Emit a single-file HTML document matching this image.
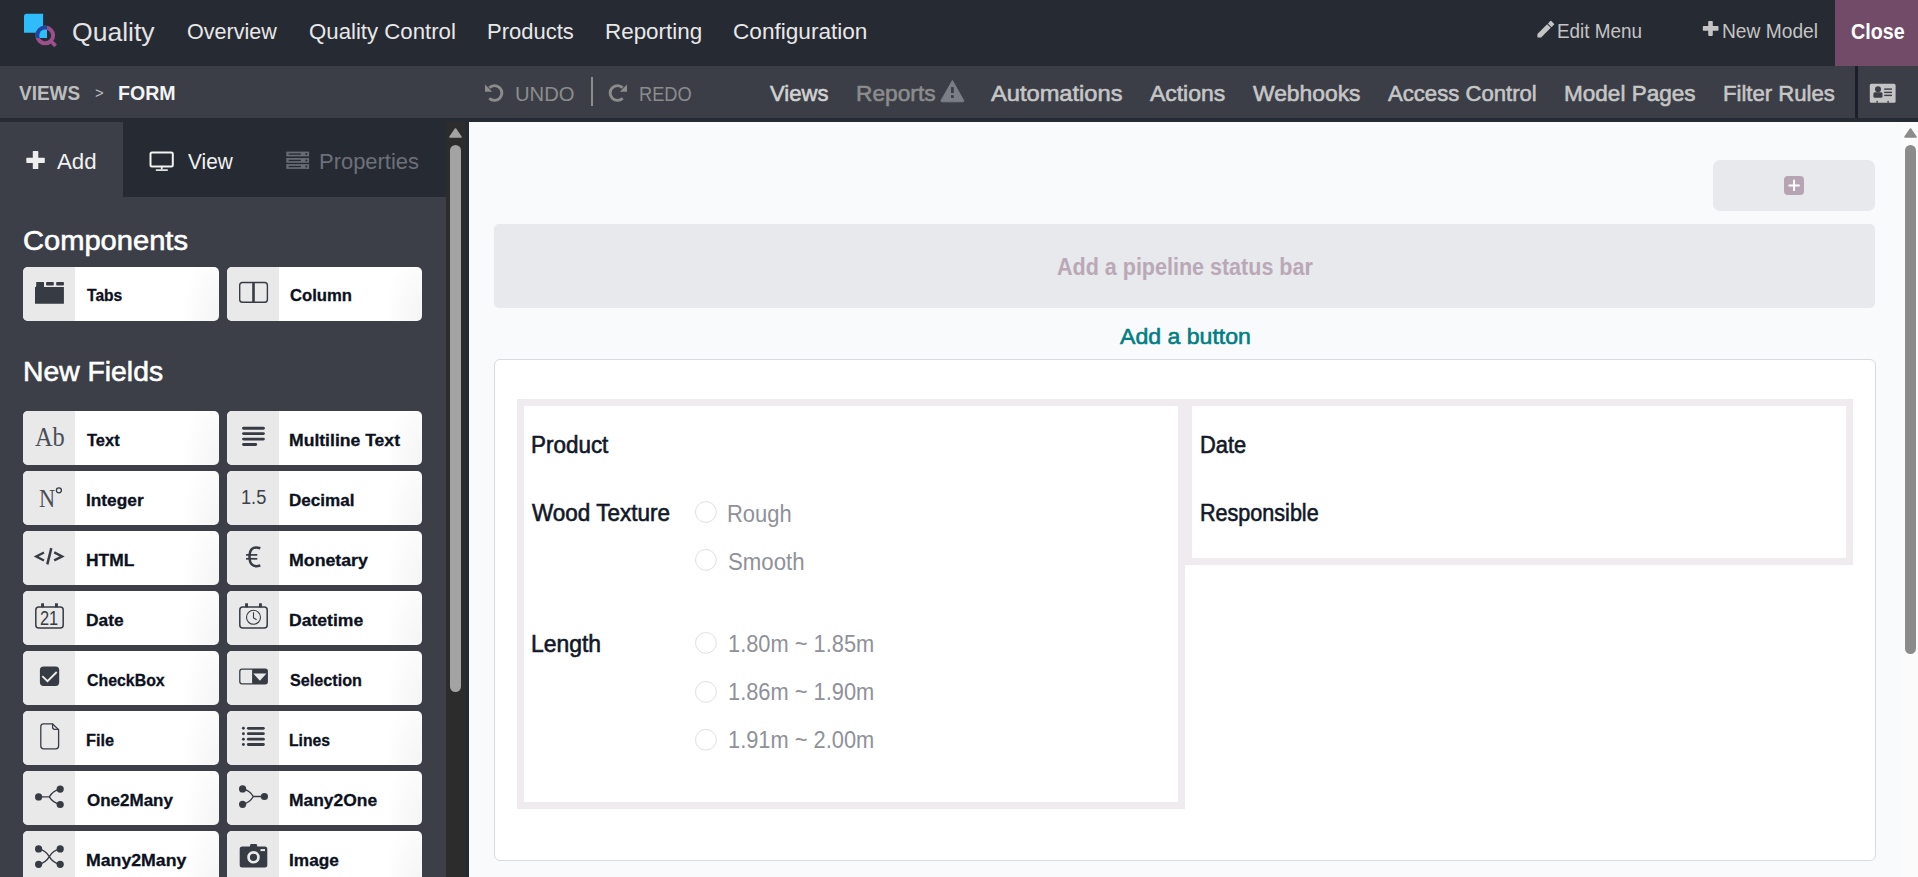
<!DOCTYPE html>
<html><head><meta charset="utf-8"><style>
*{box-sizing:border-box}
html,body{margin:0;padding:0;width:1918px;height:877px;overflow:hidden;background:#f9fafb;font-family:'Liberation Sans',sans-serif}
.a{position:absolute}
.t{position:absolute;white-space:nowrap;line-height:1;transform-origin:0 0}
.card{position:absolute;height:54px;background:#fff;border-radius:5px;overflow:hidden;background-image:radial-gradient(ellipse 38px 75px at 100% 100%,rgba(0,0,0,0.045),rgba(0,0,0,0) 100%)}
.card .ci{position:absolute;left:0;top:0;width:52px;height:54px;background:#e9e9ea}
</style></head><body>
<div class="a" style="left:0;top:0;width:1918px;height:66px;background:#262a33"></div>
<div class="a" style="left:1835px;top:0;width:83px;height:66px;background:#714b67"></div>
<div class="a" style="left:0;top:66px;width:1918px;height:52px;background:#3b3e47"></div>
<div class="a" style="left:0;top:118px;width:1918px;height:4px;background:#262a33"></div>
<div class="a" style="left:1855px;top:66px;width:3px;height:52px;background:#1a1f2b"></div>
<div class="a" style="left:591px;top:77px;width:2px;height:29px;background:#8c8c8c"></div>
<!-- sidebar -->
<div class="a" style="left:0;top:118px;width:469px;height:759px;background:#262a33"></div>
<div class="a" style="left:0;top:197px;width:446px;height:680px;background:#3c3f47"></div>
<div class="a" style="left:0;top:122px;width:123px;height:75px;background:#3c3f47"></div>
<div class="a" style="left:446px;top:122px;width:19px;height:755px;background:#2c2c2c"></div>
<div class="a" style="left:450px;top:145px;width:11px;height:547px;background:#a3a3a3;border-radius:6px"></div>
<!-- main -->
<div class="a" style="left:469px;top:122px;width:1449px;height:755px;background:#f9fafb"></div>
<div class="a" style="left:1901px;top:122px;width:17px;height:755px;background:#fbfbfb"></div>
<div class="a" style="left:1905px;top:145px;width:11px;height:509px;background:#8b8b8b;border-radius:6px"></div>
<div class="a" style="left:1713px;top:160px;width:162px;height:51px;background:#e7e9ed;border-radius:7px"></div>
<div class="a" style="left:1784px;top:176px;width:20px;height:19px;background:#b6a3b4;border-radius:4px"></div>
<div class="a" style="left:494px;top:224px;width:1381px;height:84px;background:#e7e9ed;border-radius:5px"></div>
<div class="a" style="left:494px;top:359px;width:1382px;height:502px;background:#fff;border:1px solid #d8dadd;border-radius:6px"></div>
<div class="a" style="left:517px;top:399px;width:668px;height:410px;border:7px solid #efebee;background:#fff"></div>
<div class="a" style="left:1185px;top:399px;width:668px;height:166px;border:7px solid #efebee;background:#fff"></div>
<div class="card" style="left:23px;top:267px;width:196px"><div class="ci"></div></div>
<div class="card" style="left:227px;top:267px;width:195px"><div class="ci"></div></div>
<div class="card" style="left:23px;top:411px;width:196px"><div class="ci"></div></div>
<div class="card" style="left:227px;top:411px;width:195px"><div class="ci"></div></div>
<div class="card" style="left:23px;top:471px;width:196px"><div class="ci"></div></div>
<div class="card" style="left:227px;top:471px;width:195px"><div class="ci"></div></div>
<div class="card" style="left:23px;top:531px;width:196px"><div class="ci"></div></div>
<div class="card" style="left:227px;top:531px;width:195px"><div class="ci"></div></div>
<div class="card" style="left:23px;top:591px;width:196px"><div class="ci"></div></div>
<div class="card" style="left:227px;top:591px;width:195px"><div class="ci"></div></div>
<div class="card" style="left:23px;top:651px;width:196px"><div class="ci"></div></div>
<div class="card" style="left:227px;top:651px;width:195px"><div class="ci"></div></div>
<div class="card" style="left:23px;top:711px;width:196px"><div class="ci"></div></div>
<div class="card" style="left:227px;top:711px;width:195px"><div class="ci"></div></div>
<div class="card" style="left:23px;top:771px;width:196px"><div class="ci"></div></div>
<div class="card" style="left:227px;top:771px;width:195px"><div class="ci"></div></div>
<div class="card" style="left:23px;top:831px;width:196px"><div class="ci"></div></div>
<div class="card" style="left:227px;top:831px;width:195px"><div class="ci"></div></div>
<svg class="a" style="left:0;top:0;overflow:visible" width="1918" height="877" viewBox="0 0 1918 877">
<defs>
<clipPath id="q1"><rect x="30" y="20" width="17" height="18"/></clipPath>
</defs>
<!-- logo -->
<path d="M24,16.3 Q24,13.8 26.5,13.8 H43.1 V32.8 H24 Z" fill="#2ebcfa"/>
<circle cx="45.2" cy="35.4" r="7.9" fill="none" stroke="#9c5089" stroke-width="4"/>
<g clip-path="url(#q1)"><circle cx="45.2" cy="35.4" r="7.9" fill="none" stroke="#1a4aa0" stroke-width="4"/><circle cx="45.2" cy="35.4" r="5.9" fill="#2ebcfa"/></g>
<line x1="50.8" y1="41" x2="55.6" y2="45.8" stroke="#9c5089" stroke-width="3.8"/>
<!-- pencil -->
<g transform="translate(1545.5,29.5) rotate(-45)" fill="#c4c4c4">
<path d="M-11.4,0 L-8.8,-2.6 H4.9 V2.6 H-8.8 Z"/>
<rect x="5.9" y="-2.6" width="4.2" height="5.2" rx="0.7"/>
</g>
<!-- plus new model -->
<rect x="1702.8" y="26.1" width="15.7" height="4.7" rx="0.8" fill="#c4c4c4"/>
<rect x="1708.2" y="20.9" width="4.6" height="15" rx="0.8" fill="#c4c4c4"/>
<!-- undo -->
<g id="undo" fill="none" stroke="#8c8c8c">
<path d="M489.3,87.8 A7.35,7.35 0 1 1 489.3,98.2" stroke-width="2.9"/>
<path d="M485,84.6 L485,91.8 L492.2,91.8 Z" fill="#8c8c8c" stroke="none"/>
</g>
<g transform="translate(1112,0) scale(-1,1)" fill="none" stroke="#8c8c8c">
<path d="M489.3,87.8 A7.35,7.35 0 1 1 489.3,98.2" stroke-width="2.9"/>
<path d="M485,84.6 L485,91.8 L492.2,91.8 Z" fill="#8c8c8c" stroke="none"/>
</g>
<!-- warning -->
<path d="M952.4,80.5 L963.6,100.2 Q964.4,101.8 962.6,101.8 L942.2,101.8 Q940.4,101.8 941.2,100.2 Z" fill="#7b7e84" stroke="#7b7e84" stroke-width="1" stroke-linejoin="round"/>
<rect x="951" y="87.1" width="2.8" height="5.9" fill="#3b3e47"/>
<rect x="951" y="95.2" width="2.8" height="2.7" fill="#3b3e47"/>
<!-- id card -->
<rect x="1869.8" y="83.8" width="25.8" height="19" rx="1.6" fill="#c4c4c4"/>
<circle cx="1878" cy="89.2" r="3" fill="#3b3e47"/>
<rect x="1873.4" y="92.2" width="9.1" height="5.6" rx="1.5" fill="#3b3e47"/>
<rect x="1884.2" y="88.4" width="7.8" height="1.4" fill="#3b3e47"/>
<rect x="1884.2" y="91.7" width="7.8" height="1.4" fill="#3b3e47"/>
<rect x="1884.2" y="94.7" width="7.8" height="1.4" fill="#3b3e47"/>
<rect x="1876.4" y="100.8" width="1.4" height="2" fill="#3b3e47"/>
<rect x="1887.4" y="100.8" width="1.4" height="2" fill="#3b3e47"/>
<!-- sidebar tab icons -->
<rect x="26.3" y="157.8" width="18.5" height="5.1" rx="0.6" fill="#eeeeee"/>
<rect x="32.8" y="151.1" width="5.5" height="18" rx="0.6" fill="#eeeeee"/>
<rect x="150.5" y="152.5" width="22.3" height="14.1" rx="1.5" fill="none" stroke="#f2f2f2" stroke-width="2"/>
<rect x="160.9" y="166.5" width="1.7" height="3" fill="#f2f2f2"/>
<rect x="155.8" y="169.3" width="12" height="1.6" fill="#f2f2f2"/>
<g fill="#676b73">
<rect x="286.3" y="151.6" width="22.8" height="4.8"/>
<rect x="286.3" y="158" width="22.8" height="4.8"/>
<rect x="286.3" y="164.1" width="22.8" height="4.8"/>
</g>
<g fill="#262a33">
<rect x="288.6" y="153.4" width="12.3" height="1.3"/><circle cx="306.4" cy="154" r="1"/>
<rect x="288.6" y="159.8" width="12.3" height="1.3"/><circle cx="306.4" cy="160.4" r="1"/>
<rect x="288.6" y="165.9" width="12.3" height="1.3"/><circle cx="306.4" cy="166.5" r="1"/>
</g>
<!-- card icons -->
<g fill="#373b44">
<!-- tabs -->
<rect x="36.2" y="282" width="7.8" height="6" rx="0.5"/>
<rect x="46.1" y="282" width="7.7" height="3.6" rx="0.8"/>
<rect x="56.2" y="282" width="7.7" height="3.6" rx="0.8"/>
<path d="M35,287 H36.2 V286 H44 V287 H63.9 V303.7 H35 Z"/>
</g>
<g fill="none" stroke="#373b44">
<!-- column -->
<rect x="239.7" y="282.5" width="27.7" height="19.7" rx="2.8" stroke-width="1.4"/>
<line x1="253.5" y1="282.5" x2="253.5" y2="302.2" stroke-width="2.6"/>
<!-- multiline -->
<g stroke-width="2.9" stroke-linecap="round">
<line x1="243.5" y1="428.2" x2="263.4" y2="428.2"/>
<line x1="243.5" y1="433.6" x2="263.4" y2="433.6"/>
<line x1="243.5" y1="439.1" x2="263.4" y2="439.1"/>
<line x1="243.5" y1="444.5" x2="255.7" y2="444.5"/>
</g>
<!-- html -->
<g stroke-width="2.3" stroke-linecap="butt" stroke-linejoin="miter">
<polyline points="44,552.4 36.2,556.4 44,560.4"/>
<polyline points="54.2,552.4 62.2,556.4 54.2,560.4"/>
<line x1="51.3" y1="548.1" x2="47.3" y2="564.4" stroke-width="2.5"/>
</g>
<!-- euro -->
<path d="M260.3,548.3 C252,545.6 249.5,550.5 249.5,556.8 C249.5,563.2 252,568 260.3,565.5" stroke-width="2.5"/>
<line x1="246" y1="554.9" x2="257.3" y2="554.9" stroke-width="1.7"/>
<line x1="246" y1="558.8" x2="257.3" y2="558.8" stroke-width="1.7"/>
<!-- calendars -->
<rect x="35.8" y="607.1" width="27.4" height="21" rx="3" stroke-width="1.5"/>
<rect x="239.8" y="607.1" width="27.4" height="21" rx="3" stroke-width="1.5"/>
<circle cx="253.5" cy="617.3" r="7" stroke-width="1.1"/>
<circle cx="58.9" cy="490.3" r="2.5" stroke-width="1.3"/>
<polyline points="253.5,612.2 253.5,617.9 256.6,619.8" stroke-width="1.1"/>
<!-- checkbox -->
<!-- selection -->
<path d="M252.1,669.1 H242 Q239.8,669.1 239.8,671.6 V681.6 Q239.8,683.9 242,683.9 H252.1" stroke-width="1.3"/>
<!-- file -->
<path d="M52.4,723.8 H43.6 Q40.8,723.8 40.8,726.6 V746.1 Q40.8,748.9 43.6,748.9 H55.8 Q58.6,748.9 58.6,746.1 V729.6 Z" stroke-width="1.3" stroke-linejoin="round"/>
<path d="M52.6,723.8 V727.3 Q52.6,729.4 54.7,729.4 H58.6" stroke-width="1.3"/>
<!-- lines -->
<g stroke-width="2.8" stroke-linecap="round">
<line x1="248.3" y1="728.3" x2="263.4" y2="728.3"/>
<line x1="248.3" y1="733.7" x2="263.4" y2="733.7"/>
<line x1="248.3" y1="739.2" x2="263.4" y2="739.2"/>
<line x1="248.3" y1="744.5" x2="263.4" y2="744.5"/>
</g>
<!-- one2many -->
<g stroke-width="1.4">
<path d="M38.6,796.9 H49.3 Q53,790.5 60.2,789.1 M49.3,796.9 Q53,803 60.2,804.5"/>
<path d="M264.4,796.5 H253.3 Q249.8,790.3 242.6,788.9 M253.3,796.5 Q249.8,802.8 242.6,804.3"/>
<path d="M38.6,848.9 Q45.5,850.2 49.3,856.6 Q53,850.2 60.2,848.9 M38.6,864.3 Q45.5,863 49.3,856.6 Q53,863 60.2,864.3"/>
</g>
</g>
<g fill="#373b44">
<circle cx="38.6" cy="796.9" r="3.6"/><circle cx="60.2" cy="789.1" r="3.6"/><circle cx="60.2" cy="804.5" r="3.6"/>
<circle cx="242.6" cy="788.9" r="3.6"/><circle cx="242.6" cy="804.3" r="3.6"/><circle cx="264.4" cy="796.5" r="3.6"/>
<circle cx="38.6" cy="848.9" r="3.6"/><circle cx="60.2" cy="848.9" r="3.6"/><circle cx="38.6" cy="864.3" r="3.6"/><circle cx="60.2" cy="864.3" r="3.6"/>
<!-- lines dots -->
<circle cx="243.4" cy="728.3" r="1.45"/><circle cx="243.4" cy="733.7" r="1.45"/><circle cx="243.4" cy="739.2" r="1.45"/><circle cx="243.4" cy="744.5" r="1.45"/>
<!-- calendar pegs -->
<rect x="41.1" y="603.3" width="2.9" height="4"/><rect x="55" y="603.3" width="2.9" height="4"/>
<rect x="245.1" y="603.3" width="2.9" height="4"/><rect x="259" y="603.3" width="2.9" height="4"/>
<!-- checkbox -->
<rect x="39.9" y="666.4" width="19.3" height="19.5" rx="3.6"/>
<!-- selection right -->
<path d="M252.1,668.5 H265.2 Q267.9,668.5 267.9,671.2 V681.8 Q267.9,684.5 265.2,684.5 H252.1 Z"/>
<!-- camera -->
<path d="M242.2,846.4 H249.8 L250.6,844 H256.6 L257.4,846.4 H264.8 Q267.3,846.4 267.3,848.9 V865.1 Q267.3,867.6 264.8,867.6 H242.2 Q239.7,867.6 239.7,865.1 V848.9 Q239.7,846.4 242.2,846.4 Z"/>
</g>
<polyline points="42.3,676.1 47.5,681.2 56.7,672" fill="none" stroke="#eeeeee" stroke-width="1.8"/>
<path d="M253.3,673.6 H266.4 L259.9,680.8 Z" fill="#eaeaea"/>
<circle cx="253.5" cy="857.3" r="4.95" fill="none" stroke="#eaeaea" stroke-width="2.7"/>
<rect x="260.5" y="849.1" width="4.5" height="2" fill="#eaeaea"/>
<!-- scrollbar arrows -->
<path d="M455.5,129 L461,137 H450 Z" fill="#a3a3a3" stroke="#a3a3a3" stroke-width="1.6" stroke-linejoin="round"/>
<path d="M1910.5,129 L1916,137 H1905 Z" fill="#8b8b8b" stroke="#8b8b8b" stroke-width="1.6" stroke-linejoin="round"/>
<!-- plus in add button -->
<rect x="1788.5" y="184.5" width="11.2" height="2" fill="#fff"/>
<rect x="1793.1" y="179.6" width="2" height="11.4" fill="#fff"/>
<!-- radios -->
<g fill="#fff" stroke="#dee0e3" stroke-width="1">
<circle cx="705.9" cy="512" r="10.4"/>
<circle cx="705.9" cy="559.9" r="10.4"/>
<circle cx="705.9" cy="642.9" r="10.4"/>
<circle cx="705.9" cy="691.9" r="10.4"/>
<circle cx="705.9" cy="739.7" r="10.4"/>
</g>
</svg>

<div class="t" style="left:71.96px;top:19.56px;font-size:25.58px;font-weight:400;font-family:'Liberation Sans',sans-serif;color:#e4e4e4;transform:scaleX(1.0380);">Quality</div>
<div class="t" style="left:187.04px;top:21.35px;font-size:22.53px;font-weight:400;font-family:'Liberation Sans',sans-serif;color:#e8e8e8;transform:scaleX(0.9570);">Overview</div>
<div class="t" style="left:309.01px;top:21.35px;font-size:22.53px;font-weight:400;font-family:'Liberation Sans',sans-serif;color:#e8e8e8;transform:scaleX(0.9864);">Quality Control</div>
<div class="t" style="left:487.05px;top:21.35px;font-size:22.53px;font-weight:400;font-family:'Liberation Sans',sans-serif;color:#e8e8e8;transform:scaleX(0.9767);">Products</div>
<div class="t" style="left:605.01px;top:21.35px;font-size:22.53px;font-weight:400;font-family:'Liberation Sans',sans-serif;color:#e8e8e8;transform:scaleX(0.9947);">Reporting</div>
<div class="t" style="left:733.00px;top:21.35px;font-size:22.53px;font-weight:400;font-family:'Liberation Sans',sans-serif;color:#e8e8e8;transform:scaleX(1.0038);">Configuration</div>
<div class="t" style="left:1557.47px;top:21.40px;font-size:20.35px;font-weight:400;font-family:'Liberation Sans',sans-serif;color:#c4c4c4;transform:scaleX(0.9289);">Edit Menu</div>
<div class="t" style="left:1722.46px;top:21.40px;font-size:20.35px;font-weight:400;font-family:'Liberation Sans',sans-serif;color:#c4c4c4;transform:scaleX(0.9440);">New Model</div>
<div class="t" style="left:1850.51px;top:21.32px;font-size:22.09px;font-weight:700;font-family:'Liberation Sans',sans-serif;color:#ffffff;transform:scaleX(0.8915);">Close</div>
<div class="t" style="left:19.20px;top:83.25px;font-size:20.06px;font-weight:700;font-family:'Liberation Sans',sans-serif;color:#bdbdbd;transform:scaleX(0.9453);">VIEWS</div>
<div class="t" style="left:95.00px;top:87.26px;font-size:13.81px;font-weight:400;font-family:'Liberation Sans',sans-serif;color:#bdbdbd;transform:scaleX(1.0750);">&gt;</div>
<div class="t" style="left:118.02px;top:83.25px;font-size:20.06px;font-weight:700;font-family:'Liberation Sans',sans-serif;color:#f4f4f4;transform:scaleX(0.9754);">FORM</div>
<div class="t" style="left:514.62px;top:83.66px;font-size:20.64px;font-weight:400;font-family:'Liberation Sans',sans-serif;color:#8c8c8c;transform:scaleX(0.9814);">UNDO</div>
<div class="t" style="left:638.62px;top:83.66px;font-size:20.64px;font-weight:400;font-family:'Liberation Sans',sans-serif;color:#8c8c8c;transform:scaleX(0.8845);">REDO</div>
<div class="t" style="left:770.30px;top:81.68px;font-size:22.97px;font-weight:400;-webkit-text-stroke:0.6px currentColor;font-family:'Liberation Sans',sans-serif;color:#d2d2d2;transform:scaleX(0.9623);">Views</div>
<div class="t" style="left:855.61px;top:81.68px;font-size:22.97px;font-weight:400;-webkit-text-stroke:0.6px currentColor;font-family:'Liberation Sans',sans-serif;color:#8c8c8c;transform:scaleX(0.9899);">Reports</div>
<div class="t" style="left:990.90px;top:81.68px;font-size:22.97px;font-weight:400;-webkit-text-stroke:0.6px currentColor;font-family:'Liberation Sans',sans-serif;color:#c6c6c6;transform:scaleX(1.0299);">Automations</div>
<div class="t" style="left:1149.90px;top:81.68px;font-size:22.97px;font-weight:400;-webkit-text-stroke:0.6px currentColor;font-family:'Liberation Sans',sans-serif;color:#c6c6c6;">Actions</div>
<div class="t" style="left:1252.80px;top:81.68px;font-size:22.97px;font-weight:400;-webkit-text-stroke:0.6px currentColor;font-family:'Liberation Sans',sans-serif;color:#c6c6c6;transform:scaleX(0.9944);">Webhooks</div>
<div class="t" style="left:1387.90px;top:81.68px;font-size:22.97px;font-weight:400;-webkit-text-stroke:0.6px currentColor;font-family:'Liberation Sans',sans-serif;color:#c6c6c6;transform:scaleX(0.9630);">Access Control</div>
<div class="t" style="left:1564.12px;top:81.68px;font-size:22.97px;font-weight:400;-webkit-text-stroke:0.6px currentColor;font-family:'Liberation Sans',sans-serif;color:#c6c6c6;transform:scaleX(0.9812);">Model Pages</div>
<div class="t" style="left:1722.64px;top:81.68px;font-size:22.97px;font-weight:400;-webkit-text-stroke:0.6px currentColor;font-family:'Liberation Sans',sans-serif;color:#c6c6c6;transform:scaleX(0.9635);">Filter Rules</div>
<div class="t" style="left:56.80px;top:150.48px;font-size:22.97px;font-weight:400;font-family:'Liberation Sans',sans-serif;color:#f2f2f2;transform:scaleX(0.9675);">Add</div>
<div class="t" style="left:187.70px;top:150.48px;font-size:22.97px;font-weight:400;font-family:'Liberation Sans',sans-serif;color:#f2f2f2;transform:scaleX(0.9060);">View</div>
<div class="t" style="left:319.49px;top:150.48px;font-size:22.97px;font-weight:400;font-family:'Liberation Sans',sans-serif;color:#6d7079;transform:scaleX(0.9549);">Properties</div>
<div class="t" style="left:22.96px;top:227.28px;font-size:27.91px;font-weight:400;-webkit-text-stroke:0.6px currentColor;font-family:'Liberation Sans',sans-serif;color:#ffffff;transform:scaleX(1.0427);">Components</div>
<div class="t" style="left:22.87px;top:358.28px;font-size:27.91px;font-weight:400;-webkit-text-stroke:0.6px currentColor;font-family:'Liberation Sans',sans-serif;color:#ffffff;transform:scaleX(1.0147);">New Fields</div>
<div class="t" style="left:1057.20px;top:256.49px;font-size:23.55px;font-weight:700;font-family:'Liberation Sans',sans-serif;color:#baa8b6;transform:scaleX(0.9136);">Add a pipeline status bar</div>
<div class="t" style="left:1119.90px;top:324.63px;font-size:22.67px;font-weight:400;-webkit-text-stroke:0.6px currentColor;font-family:'Liberation Sans',sans-serif;color:#017e84;transform:scaleX(1.0187);">Add a button</div>
<div class="t" style="left:531.05px;top:434.49px;font-size:23.55px;font-weight:400;-webkit-text-stroke:0.6px currentColor;font-family:'Liberation Sans',sans-serif;color:#111827;transform:scaleX(0.9531);">Product</div>
<div class="t" style="left:532.00px;top:502.29px;font-size:23.55px;font-weight:400;-webkit-text-stroke:0.6px currentColor;font-family:'Liberation Sans',sans-serif;color:#111827;transform:scaleX(0.9549);">Wood Texture</div>
<div class="t" style="left:531.03px;top:633.49px;font-size:23.55px;font-weight:400;-webkit-text-stroke:0.6px currentColor;font-family:'Liberation Sans',sans-serif;color:#111827;transform:scaleX(0.9714);">Length</div>
<div class="t" style="left:1199.87px;top:434.29px;font-size:23.55px;font-weight:400;-webkit-text-stroke:0.6px currentColor;font-family:'Liberation Sans',sans-serif;color:#111827;transform:scaleX(0.9292);">Date</div>
<div class="t" style="left:1199.88px;top:501.69px;font-size:23.55px;font-weight:400;-webkit-text-stroke:0.6px currentColor;font-family:'Liberation Sans',sans-serif;color:#111827;transform:scaleX(0.9156);">Responsible</div>
<div class="t" style="left:726.64px;top:502.59px;font-size:23.55px;font-weight:400;font-family:'Liberation Sans',sans-serif;color:#8f9198;transform:scaleX(0.9318);">Rough</div>
<div class="t" style="left:727.56px;top:550.59px;font-size:23.55px;font-weight:400;font-family:'Liberation Sans',sans-serif;color:#8f9198;transform:scaleX(0.9430);">Smooth</div>
<div class="t" style="left:727.57px;top:633.49px;font-size:23.55px;font-weight:400;font-family:'Liberation Sans',sans-serif;color:#8f9198;transform:scaleX(0.9271);">1.80m ~ 1.85m</div>
<div class="t" style="left:727.57px;top:681.49px;font-size:23.55px;font-weight:400;font-family:'Liberation Sans',sans-serif;color:#8f9198;transform:scaleX(0.9271);">1.86m ~ 1.90m</div>
<div class="t" style="left:727.57px;top:729.49px;font-size:23.55px;font-weight:400;font-family:'Liberation Sans',sans-serif;color:#8f9198;transform:scaleX(0.9271);">1.91m ~ 2.00m</div>
<div class="t" style="left:86.60px;top:287.57px;font-size:16.86px;font-weight:700;-webkit-text-stroke:0.3px currentColor;font-family:'Liberation Sans',sans-serif;color:#0c111d;transform:scaleX(0.9263);">Tabs</div>
<div class="t" style="left:290.20px;top:287.57px;font-size:16.86px;font-weight:700;-webkit-text-stroke:0.3px currentColor;font-family:'Liberation Sans',sans-serif;color:#0c111d;transform:scaleX(0.9887);">Column</div>
<div class="t" style="left:86.60px;top:432.67px;font-size:16.86px;font-weight:700;-webkit-text-stroke:0.3px currentColor;font-family:'Liberation Sans',sans-serif;color:#0c111d;transform:scaleX(0.9765);">Text</div>
<div class="t" style="left:289.16px;top:432.67px;font-size:16.86px;font-weight:700;-webkit-text-stroke:0.3px currentColor;font-family:'Liberation Sans',sans-serif;color:#0c111d;transform:scaleX(1.0425);">Multiline Text</div>
<div class="t" style="left:85.57px;top:492.67px;font-size:16.86px;font-weight:700;-webkit-text-stroke:0.3px currentColor;font-family:'Liberation Sans',sans-serif;color:#0c111d;transform:scaleX(1.0250);">Integer</div>
<div class="t" style="left:289.19px;top:492.67px;font-size:16.86px;font-weight:700;-webkit-text-stroke:0.3px currentColor;font-family:'Liberation Sans',sans-serif;color:#0c111d;transform:scaleX(1.0127);">Decimal</div>
<div class="t" style="left:85.57px;top:552.67px;font-size:16.86px;font-weight:700;-webkit-text-stroke:0.3px currentColor;font-family:'Liberation Sans',sans-serif;color:#0c111d;transform:scaleX(1.0304);">HTML</div>
<div class="t" style="left:289.15px;top:552.67px;font-size:16.86px;font-weight:700;-webkit-text-stroke:0.3px currentColor;font-family:'Liberation Sans',sans-serif;color:#0c111d;transform:scaleX(1.0527);">Monetary</div>
<div class="t" style="left:85.57px;top:612.67px;font-size:16.86px;font-weight:700;-webkit-text-stroke:0.3px currentColor;font-family:'Liberation Sans',sans-serif;color:#0c111d;transform:scaleX(1.0306);">Date</div>
<div class="t" style="left:289.16px;top:612.67px;font-size:16.86px;font-weight:700;-webkit-text-stroke:0.3px currentColor;font-family:'Liberation Sans',sans-serif;color:#0c111d;transform:scaleX(1.0429);">Datetime</div>
<div class="t" style="left:86.60px;top:672.67px;font-size:16.86px;font-weight:700;-webkit-text-stroke:0.3px currentColor;font-family:'Liberation Sans',sans-serif;color:#0c111d;transform:scaleX(0.9422);">CheckBox</div>
<div class="t" style="left:290.20px;top:672.67px;font-size:16.86px;font-weight:700;-webkit-text-stroke:0.3px currentColor;font-family:'Liberation Sans',sans-serif;color:#0c111d;transform:scaleX(0.9600);">Selection</div>
<div class="t" style="left:85.63px;top:732.67px;font-size:16.86px;font-weight:700;-webkit-text-stroke:0.3px currentColor;font-family:'Liberation Sans',sans-serif;color:#0c111d;transform:scaleX(0.9679);">File</div>
<div class="t" style="left:289.27px;top:732.67px;font-size:16.86px;font-weight:700;-webkit-text-stroke:0.3px currentColor;font-family:'Liberation Sans',sans-serif;color:#0c111d;transform:scaleX(0.9326);">Lines</div>
<div class="t" style="left:86.60px;top:792.67px;font-size:16.86px;font-weight:700;-webkit-text-stroke:0.3px currentColor;font-family:'Liberation Sans',sans-serif;color:#0c111d;transform:scaleX(1.0081);">One2Many</div>
<div class="t" style="left:289.17px;top:792.67px;font-size:16.86px;font-weight:700;-webkit-text-stroke:0.3px currentColor;font-family:'Liberation Sans',sans-serif;color:#0c111d;transform:scaleX(1.0333);">Many2One</div>
<div class="t" style="left:85.55px;top:852.67px;font-size:16.86px;font-weight:700;-webkit-text-stroke:0.3px currentColor;font-family:'Liberation Sans',sans-serif;color:#0c111d;transform:scaleX(1.0495);">Many2Many</div>
<div class="t" style="left:289.18px;top:852.67px;font-size:16.86px;font-weight:700;-webkit-text-stroke:0.3px currentColor;font-family:'Liberation Sans',sans-serif;color:#0c111d;transform:scaleX(1.0229);">Image</div>
<div class="t" style="left:34.80px;top:424.29px;font-size:27.48px;font-weight:400;font-family:'Liberation Serif',serif;color:#4a4e56;transform:scaleX(0.8879);">Ab</div>
<div class="t" style="left:39.02px;top:485.74px;font-size:25.50px;font-weight:400;font-family:'Liberation Serif',serif;color:#4a4e56;transform:scaleX(0.8765);">N</div>
<div class="t" style="left:240.69px;top:487.35px;font-size:20.06px;font-weight:400;font-family:'Liberation Sans',sans-serif;color:#3c4048;transform:scaleX(0.9077);">1.5</div>
<div class="t" style="left:40.47px;top:609.20px;font-size:19.77px;font-weight:400;font-family:'Liberation Sans',sans-serif;color:#373b44;transform:scaleX(0.8300);">21</div>
</body></html>
